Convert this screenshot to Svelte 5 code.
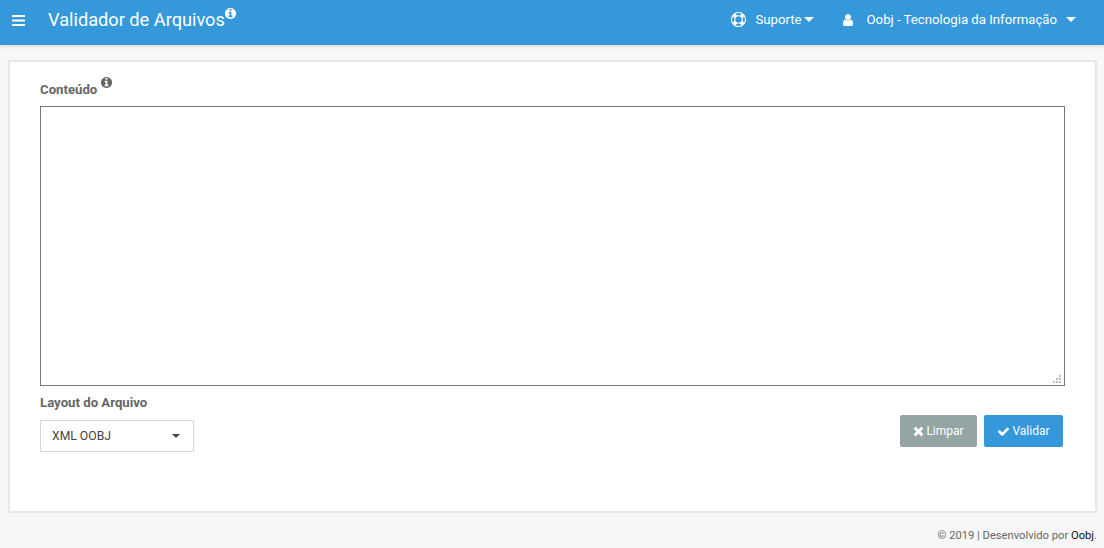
<script>
  const info = "M1152 1376v-160q0-14-9-23t-23-9h-96v-512q0-14-9-23t-23-9h-320q-14 0-23 9t-9 23v160q0 14 9 23t23 9h96v320h-96q-14 0-23 9t-9 23v160q0 14 9 23t23 9h448q14 0 23-9t9-23zm-128-896v-160q0-14-9-23t-23-9h-192q-14 0-23 9t-9 23v160q0 14 9 23t23 9h192q14 0 23-9t9-23zm640 416q0 209-103 385.5t-279.5 279.5-385.5 103-385.5-103-279.5-279.5-103-385.5 103-385.5 279.5-279.5 385.5-103 385.5 103 279.5 279.5 103 385.5z";
  const user = "M1536 1399q0 109-62.5 187t-150.5 78h-854q-88 0-150.5-78t-62.5-187q0-85 8.5-160.5t31.5-152 58.5-131 94-89 134.5-34.5q131 128 313 128t313-128q76 0 134.5 34.5t94 89 58.5 131 31.5 152 8.5 160.5zm-256-887q0 159-112.5 271.5t-271.5 112.5-271.5-112.5-112.5-271.5 112.5-271.5 271.5-112.5 271.5 112.5 112.5 271.5z";
  const times = "M1298 1322q0 40-28 68l-136 136q-28 28-68 28t-68-28l-294-294-294 294q-28 28-68 28t-68-28l-136-136q-28-28-28-68t28-68l294-294-294-294q-28-28-28-68t28-68l136-136q28-28 68-28t68 28l294 294 294-294q28-28 68-28t68 28l136 136q28 28 28 68t-28 68l-294 294 294 294q28 28 28 68z";
  const check = "M1671 566q0 40-28 68l-724 724-136 136q-28 28-68 28t-68-28l-136-136-362-362q-28-28-28-68t28-68l136-136q28-28 68-28t68 28l294 295 656-657q28-28 68-28t68 28l136 136q28 28 28 68z";
  const ring = "M896 0q182 0 348 71t286 191 191 286 71 348-71 348-191 286-286 191-348 71-348-71-286-191-191-286-71-348 71-348 191-286 286-191 348-71zm0 128q-190 0-361 90l194 194q82-28 167-28t167 28l194-194q-171-90-361-90zm-678 1129l194-194q-28-82-28-167t28-167l-194-194q-90 171-90 361t90 361zm678 407q190 0 361-90l-194-194q-82 28-167 28t-167-28l-194 194q171 90 361 90zm0-384q159 0 271.5-112.5t112.5-271.5-112.5-271.5-271.5-112.5-271.5 112.5-112.5 271.5 112.5 271.5 271.5 112.5zm484-217l194 194q90-171 90-361t-90-361l-194 194q28 82 28 167t-28 167z";
  const grip = [[6, 0], [3, 3], [6, 3], [0, 6], [3, 6], [6, 6]];
</script>

<header class="topbar">
  <svg class="bars" viewBox="0 0 13 11" aria-hidden="true">
    <rect y="0" width="13" height="2" rx="0.5" /><rect y="4.5" width="13" height="2" rx="0.5" /><rect y="9" width="13" height="2" rx="0.5" />
  </svg>
  <h1 class="title">Validador de Arquivos</h1>
  <svg class="title-info" viewBox="0 0 1792 1792" aria-hidden="true"><path d={info} /></svg>
  <nav class="menu">
    <div class="menu-item support">
      <svg class="ring" viewBox="0 0 1792 1792" aria-hidden="true"><path d={ring} /></svg>
      <span>Suporte</span><i class="caret"></i>
    </div>
    <div class="menu-item account">
      <svg class="user" viewBox="0 0 1792 1792" aria-hidden="true"><path d={user} /></svg>
      <span>Oobj - Tecnologia da Informação</span><i class="caret wide"></i>
    </div>
  </nav>
</header>

<main class="card">
  <div class="field-label top-label">
    <span>Conteúdo</span>
    <svg class="label-info" viewBox="0 0 1792 1792" aria-hidden="true"><path d={info} /></svg>
  </div>
  <div class="content-wrap">
    <textarea class="content"></textarea>
    <svg class="grip" viewBox="0 0 8 8" aria-hidden="true">
      {#each grip as [x, y]}
        <rect {x} {y} width="2" height="2" />
      {/each}
    </svg>
  </div>
  <div class="bottom">
    <div class="layout-field">
      <div class="field-label">Layout do Arquivo</div>
      <div class="select"><span>XML OOBJ</span><i class="select-caret"></i></div>
    </div>
    <div class="actions">
      <button class="btn gray"><svg viewBox="0 0 1408 1792" class="btn-x" aria-hidden="true"><path d={times} /></svg>Limpar</button>
      <button class="btn blue"><svg viewBox="0 0 1792 1792" class="btn-c" aria-hidden="true"><path d={check} /></svg>Validar</button>
    </div>
  </div>
</main>

<footer class="footer">© 2019 | Desenvolvido por <span class="brand">Oobj</span>.</footer>

<style>
  :global(body) {
    margin: 0;
    background: #f7f7f7;
    font-family: Roboto, "Liberation Sans", sans-serif;
  }
  .topbar {
    height: 45px;
    box-sizing: border-box;
    background: #3498db;
    color: #fff;
    display: flex;
    align-items: center;
    padding: 0 28px 0 12px;
    box-shadow: 0 2px 4px rgba(0, 0, 0, 0.1);
  }
  .bars { width: 13px; height: 11px; fill: #fff; margin-top: -5px; }
  .title {
    margin: -6px 0 0 23px;
    font-size: 18.2px;
    font-weight: 400;
    line-height: 24px;
  }
  .title-info { width: 13px; height: 13px; fill: #fff; align-self: flex-start; margin: 7px 0 0 -1px; }
  .menu { margin-left: auto; display: flex; align-items: center; font-size: 13.2px; }
  .menu-item { display: flex; align-items: center; margin-top: -6px; }
  .support { margin-right: 27px; }
  .ring { width: 15px; height: 15px; margin-right: 9px; fill: #fff; }
  .user { width: 14px; height: 14px; fill: #fff; margin-right: 12px; }
  .caret {
    width: 0; height: 0; margin-left: 2px;
    border-left: 5px solid transparent; border-right: 5px solid transparent; border-top: 5px solid #fff;
  }
  .caret.wide { margin-left: 9px; }

  .card {
    box-sizing: border-box;
    margin: 15px 7px 0 8px;
    height: 453px;
    background: #fff;
    border: 2px solid #e7e7e7;
    padding: 16px 30px 0 30px;
  }
  .field-label { font-size: 13.2px; font-weight: 700; color: #666; line-height: 16px; }
  .top-label { display: flex; align-items: flex-start; height: 28px; padding-top: 4px; box-sizing: border-box; }
  .label-info { width: 13px; height: 13px; fill: #666; margin: -6px 0 0 3px; }
  .content-wrap { position: relative; height: 280px; }
  .content {
    display: block;
    box-sizing: border-box;
    width: 100%;
    height: 280px;
    margin: 0;
    border: 1px solid #767676;
    background: #fff;
    border-radius: 0;
    outline: none;
    resize: none;
  }
  .grip { position: absolute; right: 4px; bottom: 3px; width: 8px; height: 8px; fill: #bdbdbd; }
  .bottom { display: flex; justify-content: space-between; align-items: flex-start; }
  .layout-field { padding-top: 9px; }
  .select {
    margin-top: 9px;
    box-sizing: border-box;
    width: 154px;
    height: 32px;
    border: 1px solid #d8d8d8;
    display: flex;
    align-items: center;
    justify-content: space-between;
    padding: 0 13px 0 11px;
    font-size: 12.2px;
    color: #444;
  }
  .select-caret {
    width: 0; height: 0; margin-top: -1px;
    border-left: 4px solid transparent; border-right: 4px solid transparent; border-top: 4px solid #444;
  }
  .actions { display: flex; gap: 7px; padding: 29px 2px 0 0; }
  .btn {
    box-sizing: border-box;
    height: 32px;
    border: 0;
    border-radius: 2px;
    color: #fff;
    font: 400 12px Roboto, "Liberation Sans", sans-serif;
    display: flex;
    align-items: center;
    justify-content: center;
    padding: 0;
  }
  .btn svg { fill: #fff; }
  .btn-x { width: 11px; height: 14px; margin-right: 2px; }
  .btn-c { width: 13px; height: 13px; margin-right: 2px; }
  .gray { width: 77px; background: #95a5a6; }
  .blue { width: 79px; background: #3498db; }
  .footer {
    text-align: right;
    font-size: 11.2px;
    color: #666;
    padding: 15px 7px 0 0;
    line-height: 16px;
  }
  .brand { color: #111; }
</style>
